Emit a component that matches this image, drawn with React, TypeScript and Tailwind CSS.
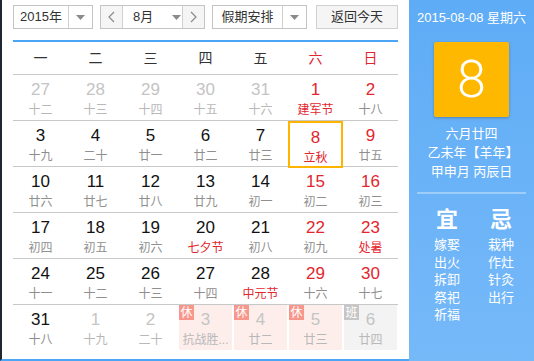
import React from "react";

type Cell = {
  d: string;
  l: string;
  faded?: boolean;
  red?: boolean;
  fest?: boolean;
  sel?: boolean;
  badge?: "休" | "班";
};

const rows: Cell[][] = [
  [
    { d: "27", l: "十二", faded: true },
    { d: "28", l: "十三", faded: true },
    { d: "29", l: "十四", faded: true },
    { d: "30", l: "十五", faded: true },
    { d: "31", l: "十六", faded: true },
    { d: "1", l: "建军节", red: true, fest: true },
    { d: "2", l: "十八", red: true },
  ],
  [
    { d: "3", l: "十九" },
    { d: "4", l: "二十" },
    { d: "5", l: "廿一" },
    { d: "6", l: "廿二" },
    { d: "7", l: "廿三" },
    { d: "8", l: "立秋", red: true, fest: true, sel: true },
    { d: "9", l: "廿五", red: true },
  ],
  [
    { d: "10", l: "廿六" },
    { d: "11", l: "廿七" },
    { d: "12", l: "廿八" },
    { d: "13", l: "廿九" },
    { d: "14", l: "初一" },
    { d: "15", l: "初二", red: true },
    { d: "16", l: "初三", red: true },
  ],
  [
    { d: "17", l: "初四" },
    { d: "18", l: "初五" },
    { d: "19", l: "初六" },
    { d: "20", l: "七夕节", fest: true },
    { d: "21", l: "初八" },
    { d: "22", l: "初九", red: true },
    { d: "23", l: "处暑", red: true, fest: true },
  ],
  [
    { d: "24", l: "十一" },
    { d: "25", l: "十二" },
    { d: "26", l: "十三" },
    { d: "27", l: "十四" },
    { d: "28", l: "中元节", fest: true },
    { d: "29", l: "十六", red: true },
    { d: "30", l: "十七", red: true },
  ],
  [
    { d: "31", l: "十八" },
    { d: "1", l: "十九", faded: true },
    { d: "2", l: "二十", faded: true },
    { d: "3", l: "抗战胜...", faded: true, badge: "休" },
    { d: "4", l: "廿二", faded: true, badge: "休" },
    { d: "5", l: "廿三", faded: true, badge: "休" },
    { d: "6", l: "廿四", faded: true, badge: "班" },
  ],
];

const font = { fontFamily: '"Liberation Sans", "Noto Sans CJK SC", sans-serif' };

function Caret() {
  return (
    <svg width="9" height="5" viewBox="0 0 9 5">
      <path d="M0 0 L9 0 L4.5 5 Z" fill="#8a8a8a" />
    </svg>
  );
}

function Chevron({ dir }: { dir: "l" | "r" }) {
  return (
    <svg width="7" height="12" viewBox="0 0 7 12">
      <path
        d={dir === "l" ? "M6 1 L1 6 L6 11" : "M1 1 L6 6 L1 11"}
        fill="none"
        stroke="#8a8a8a"
        strokeWidth="1.2"
      />
    </svg>
  );
}

function DayCell({ c }: { c: Cell }) {
  let bg = "";
  if (c.badge === "休") bg = "bg-[#fdeeec]";
  if (c.badge === "班") bg = "bg-[#f3f3f3]";
  const numColor = c.faded ? "text-[#c4c4c4]" : c.red ? "text-[#e3262e]" : "text-[#111111]";
  const lunColor = c.faded
    ? "text-[#b8b8b8]"
    : c.fest
    ? "text-[#e3262e]"
    : "text-[#8f8f8f]";
  return (
    <div className={`relative h-full ${c.badge ? "px-[1px]" : ""}`}>
      <div
        className={`relative flex h-full flex-col items-center pt-[5px] ${bg} ${
          c.sel ? "border-2 border-[#ffb400] pt-[3px]" : ""
        }`}
      >
        {c.badge && (
          <div
            className={`absolute left-0 top-0 flex h-[15px] w-[15px] items-center justify-center text-[12px] leading-none text-white ${
              c.badge === "休" ? "bg-[#f7978c]" : "bg-[#c6c6c6]"
            }`}
          >
            {c.badge}
          </div>
        )}
        <div className={`text-[17px] leading-[20px] ${numColor}`}>{c.d}</div>
        <div className={`mt-[2px] text-[12px] leading-[16px] ${lunColor}`}>{c.l}</div>
      </div>
    </div>
  );
}

export default function App() {
  const weekdays = ["一", "二", "三", "四", "五", "六", "日"];
  return (
    <div className="flex h-[361px] w-[534px] overflow-hidden bg-white" style={font}>
      <div className="h-[361px] w-[409px] border-b-2 border-l-2 border-b-[#4da5f5] border-l-[#1d2833] pl-[11px] pr-[11px]">
        <div className="mt-[5px] flex h-[24px] text-[13px] text-[#333]">
          <div className="flex h-full w-[80px] border border-[#c4c4c4]">
            <div className="flex w-[55px] items-center justify-center border-r border-[#d0d0d0]">2015年</div>
            <div className="flex flex-1 items-center justify-center">
              <Caret />
            </div>
          </div>
          <div className="ml-[7px] flex h-full w-[105px] border border-[#c4c4c4]">
            <div className="flex w-[22px] items-center justify-center border-r border-[#d0d0d0] bg-[#f5f5f5]">
              <Chevron dir="l" />
            </div>
            <div className="flex w-[60px] items-center border-r border-[#d0d0d0] pl-[10px]">
              <span>8月</span>
              <span className="ml-[19px] flex items-center">
                <Caret />
              </span>
            </div>
            <div className="flex flex-1 items-center justify-center bg-[#f5f5f5]">
              <Chevron dir="r" />
            </div>
          </div>
          <div className="ml-[7px] flex h-full w-[95px] border border-[#c4c4c4]">
            <div className="flex w-[70px] items-center justify-center border-r border-[#d0d0d0]">假期安排</div>
            <div className="flex flex-1 items-center justify-center">
              <Caret />
            </div>
          </div>
          <div className="ml-[9px] flex h-full w-[82px] items-center justify-center border border-[#d0d0d0] bg-[#f5f5f5]">
            返回今天
          </div>
        </div>
        <div className="mt-[11px] h-[2px] bg-[#4da5f5]" />
        <div className="grid h-[33px] grid-cols-7 border-b border-[#c8c8c8] text-[14px]">
          {weekdays.map((w, i) => (
            <div
              key={w}
              className={`flex items-center justify-center ${i >= 5 ? "text-[#e3262e]" : "text-[#333]"}`}
            >
              {w}
            </div>
          ))}
        </div>
        {rows.map((r, ri) => (
          <div
            key={ri}
            className={`grid grid-cols-7 ${ri < 5 ? "h-[46px] border-b border-[#c8c8c8]" : "h-[45px]"}`}
          >
            {r.map((c, ci) => (
              <DayCell key={ci} c={c} />
            ))}
          </div>
        ))}
      </div>
      <div className="flex h-[361px] flex-1 flex-col items-center bg-gradient-to-b from-[#5eacf6] to-[#76b9f9] text-white">
        <div className="mt-[10px] text-[13px] leading-[16px]">2015-08-08 星期六</div>
        <div className="mt-[16px] flex h-[75px] w-[75px] items-center justify-center rounded-[2px] bg-[#ffb800] shadow-[0_1px_3px_rgba(0,0,0,0.25)]">
          <span className="text-[52px] font-light leading-none" style={{ fontFamily: "Roboto, sans-serif" }}>
            8
          </span>
        </div>
        <div className="mt-[7px] text-[13px] leading-[19px]">六月廿四</div>
        <div className="ml-[3px] flex text-[13px] leading-[19px]">
          <span>乙未年</span>
          <span className="inline-block w-[13px] text-right">【</span>
          <span>羊年</span>
          <span className="inline-block w-[13px] text-left">】</span>
        </div>
        <div className="text-[13px] leading-[19px]">甲申月 丙辰日</div>
        <div className="mt-[11px] h-[2px] w-[109px] bg-[#9fcdf9]" />
        <div className="ml-[5px] mt-[14px] flex w-[76px] justify-between text-[22px] font-bold leading-[24px]">
          <span>宜</span>
          <span>忌</span>
        </div>
        <div className="ml-[5px] mt-[4px] flex w-[80px] justify-between text-[13px] leading-[17.5px]">
          <div className="flex flex-col">
            <span>嫁娶</span>
            <span>出火</span>
            <span>拆卸</span>
            <span>祭祀</span>
            <span>祈福</span>
          </div>
          <div className="flex flex-col">
            <span>栽种</span>
            <span>作灶</span>
            <span>针灸</span>
            <span>出行</span>
          </div>
        </div>
      </div>
    </div>
  );
}
